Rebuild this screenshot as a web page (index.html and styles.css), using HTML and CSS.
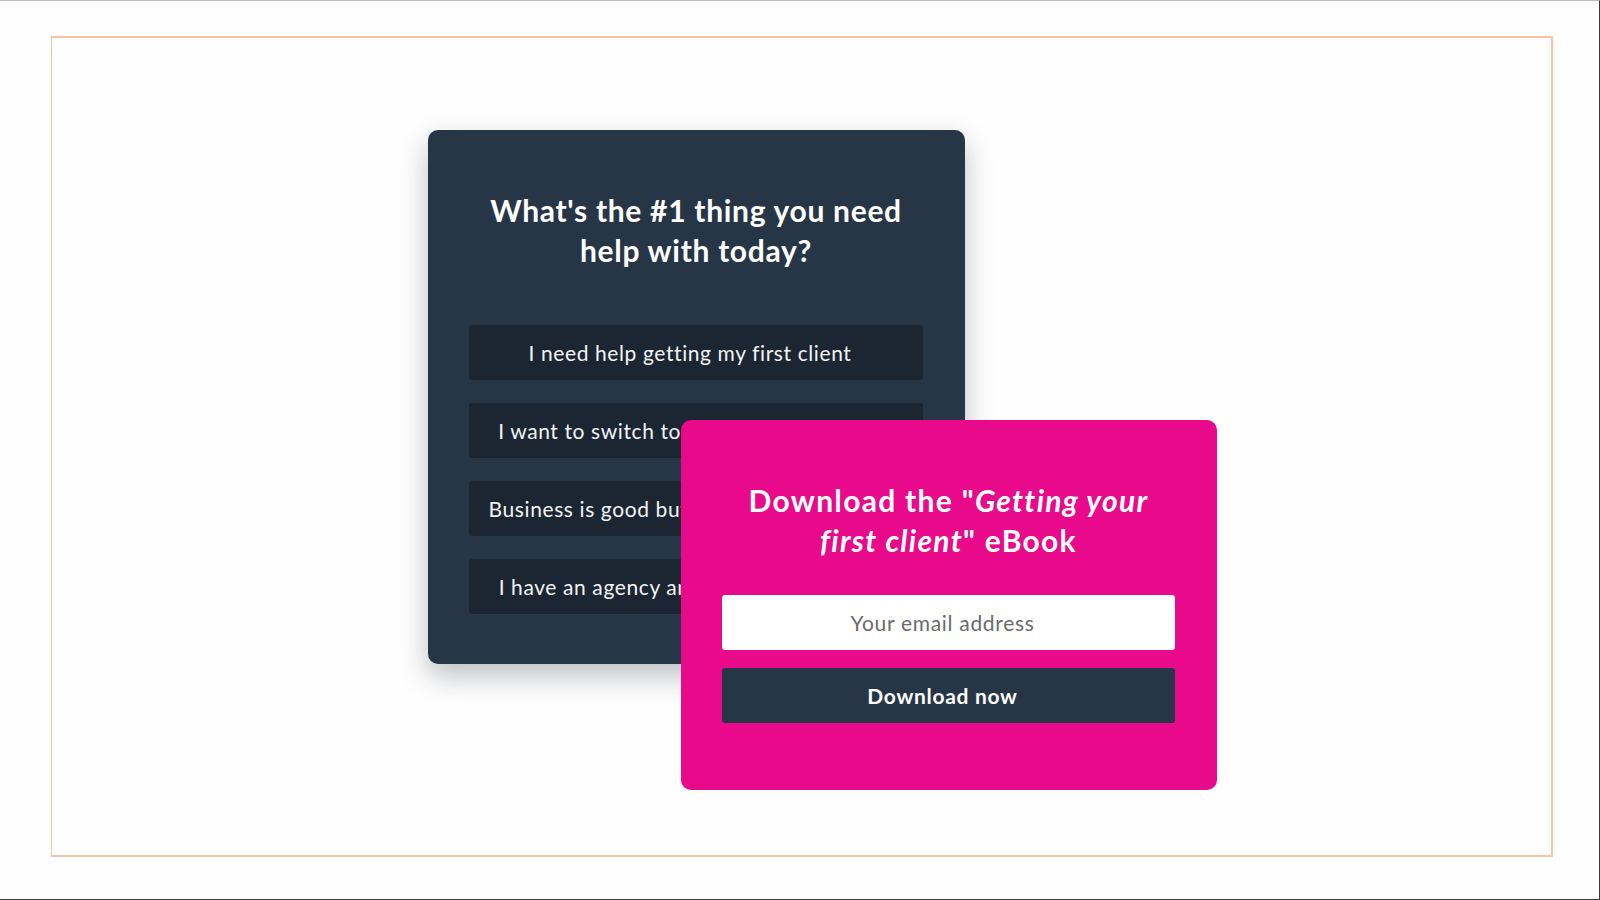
FILE: index.html
```html
<!DOCTYPE html>
<html lang="en">
<head>
<meta charset="utf-8">
<title>Popups</title>
<link rel="stylesheet" href="styles.css">
</head>
<body>
<div class="page">
  <div class="frame">
    <div class="stage">
      <section class="card card-quiz">
        <h2 class="quiz-title">What's the #1 thing you need help with today?</h2>
        <div class="options">
          <div class="option">I need help getting my first client</div>
          <div class="option">I want to switch to freelancing full time</div>
          <div class="option">Business is good but I want to grow more</div>
          <div class="option">I have an agency and need more clients</div>
        </div>
      </section>
      <section class="card card-ebook">
        <h2 class="ebook-title">Download the "<em>Getting your first client</em>" eBook</h2>
        <form class="ebook-form">
          <input class="email" type="text" placeholder="Your email address">
          <button class="download" type="button">Download now</button>
        </form>
      </section>
    </div>
  </div>
</div>
</body>
</html>
```

FILE: styles.css
```css
* { box-sizing: border-box; }
html, body { margin: 0; padding: 0; background: #ffffff; }
body { font-family: "Lato", "Open Sans", sans-serif; }

.page {
  width: 1600px;
  height: 900px;
  border-top: 1px solid #bdbdbd;
  border-right: 1px solid #3a3a3a;
  border-bottom: 1px solid #3a3a3a;
  background: #fefefe;
  padding-top: 35px;
  padding-left: 51px;
}

.frame {
  width: 1502px;
  height: 821px;
  border: 2px solid #f7c3a6;
  border-left-width: 1px;
  padding-top: 92px;
  padding-left: 376px;
}

.stage {
  display: grid;
  grid-template-columns: 253px 284px 252px;
  grid-template-rows: 290px 244px 126px;
}

.card { border-radius: 10px; }

.card-quiz {
  grid-column: 1 / 3;
  grid-row: 1 / 3;
  background: #273646;
  box-shadow: 0 12px 28px rgba(20, 30, 45, 0.28);
  padding: 60px 42px 0 41px;
}

.quiz-title, .ebook-title {
  margin: 0;
  color: #ffffff;
  font-size: 30px;
  line-height: 40px;
  font-weight: 700;
  letter-spacing: 0.7px;
  text-align: center;
}

.quiz-title { padding: 0 20px; }

.options {
  margin-top: 55px;
  display: flex;
  flex-direction: column;
  gap: 23px;
}

.option {
  height: 55px;
  background: #1c2633;
  border-radius: 3px;
  color: #f2f4f6;
  font-size: 21px;
  letter-spacing: 0.6px;
  padding-right: 12px;
  display: flex;
  align-items: center;
  justify-content: center;
  white-space: nowrap;
  overflow: hidden;
}

.card-ebook {
  grid-column: 2 / 4;
  grid-row: 2 / 4;
  background: #e90a8c;
  padding: 60px 42px 0 41px;
  position: relative;
  z-index: 1;
}

.ebook-title { padding: 0 10px; letter-spacing: 1.3px; }
.ebook-title em { font-style: italic; }

.ebook-form {
  margin-top: 35px;
  display: flex;
  flex-direction: column;
  gap: 18px;
}

.email {
  height: 55px;
  border: none;
  border-radius: 3px;
  background: #ffffff;
  font-family: inherit;
  font-size: 21px;
  letter-spacing: 0.7px;
  text-align: center;
  color: #333;
  padding: 0 12px 0 0;
  outline: none;
}
.email::placeholder { color: #6b6b6b; }

.download {
  height: 55px;
  border: none;
  border-radius: 3px;
  background: #273646;
  color: #ffffff;
  font-family: inherit;
  font-size: 21px;
  font-weight: 700;
  letter-spacing: 0.7px;
  padding: 0 12px 0 0;
}
```
